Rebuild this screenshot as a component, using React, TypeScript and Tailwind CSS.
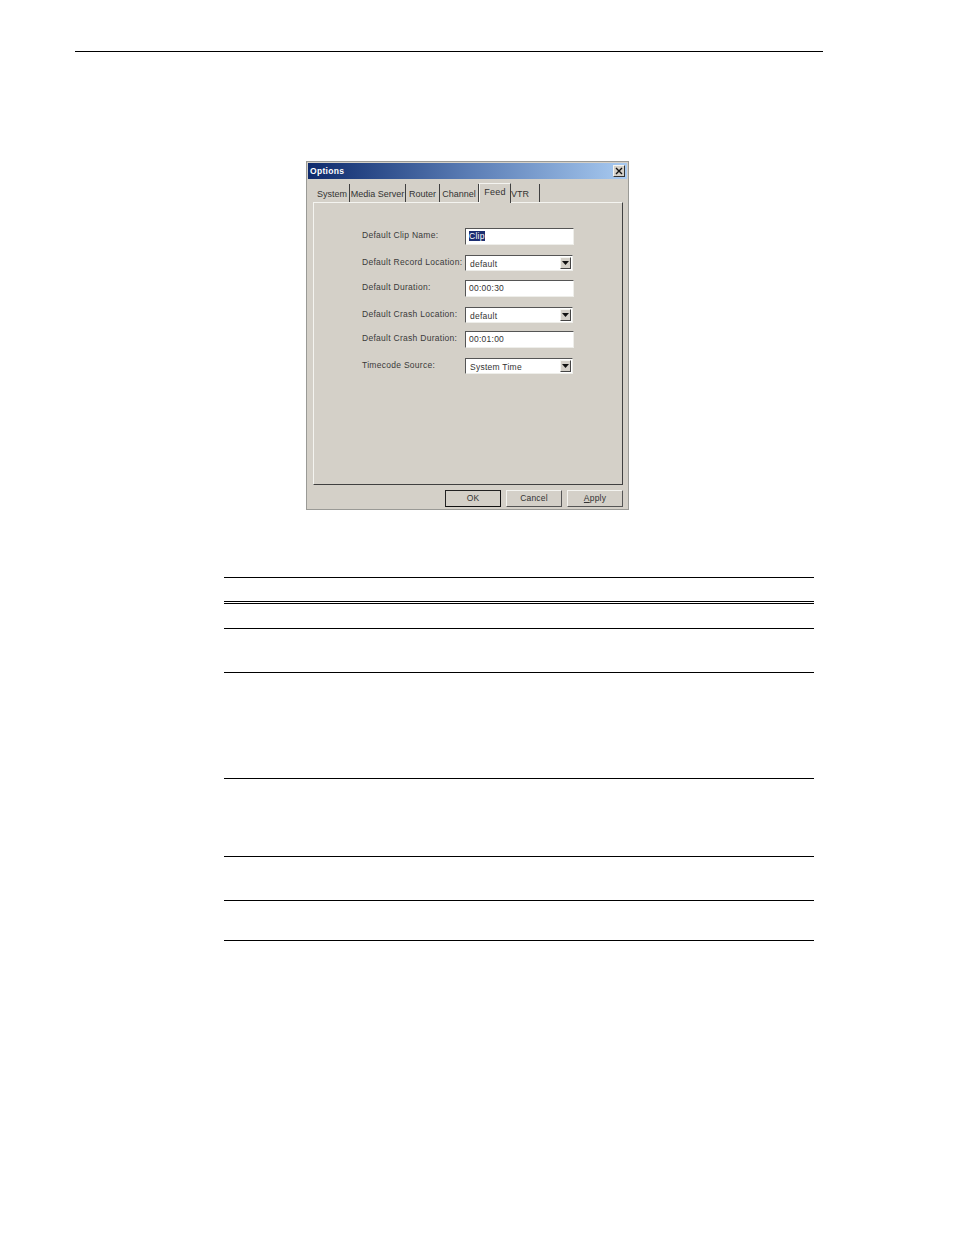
import React from "react";

const font = "font-['Liberation_Sans',Arial,sans-serif]";

function Tab({ label, className = "" }: { label: string; className?: string }) {
  return (
    <div className={`h-[18px] pt-[4px] text-center text-[9px] leading-[12px] text-[#333] border-r border-r-[#404040] ${className}`}>
      {label}
    </div>
  );
}

function TextField({ value, selected }: { value: string; selected?: boolean }) {
  return (
    <div className="h-[17px] w-[109px] border border-[#eeeeea] border-l-[#555] border-t-[#555] bg-white pl-[3px] text-[8.5px] leading-[15px] tracking-[0.25px] text-[#333]">
      {selected ? <span className="bg-[#1c2e70] text-white">{value}</span> : value}
    </div>
  );
}

function Select({ value }: { value: string }) {
  return (
    <div className="flex h-[16px] w-[108px] items-center justify-between border border-[#eeeeea] border-l-[#555] border-t-[#555] bg-white pl-[4px] pr-[1px] text-[8.5px] tracking-[0.25px] text-[#333]">
      <span className="pt-[2px]">{value}</span>
      <span className="flex h-[12px] w-[11px] items-center justify-center border border-[#f4f4f0] border-b-[#444] border-r-[#444] bg-[#d4d0c8]">
        <svg width="7" height="4" viewBox="0 0 7 4"><path d="M0 0h7L3.5 4z" fill="#111" /></svg>
      </span>
    </div>
  );
}

function Row({ label, mb, children }: { label: string; mb: string; children: React.ReactNode }) {
  return (
    <div className={`flex h-[16px] items-start ${mb}`}>
      <div className="w-[103px] whitespace-nowrap text-[8.5px] leading-[14px] tracking-[0.28px] text-[#3a3a3a]">{label}</div>
      {children}
    </div>
  );
}

function Button({ label, isDefault, className = "" }: { label: React.ReactNode; isDefault?: boolean; className?: string }) {
  return (
    <div
      className={`flex h-[17px] items-center justify-center text-[8.5px] tracking-[0.2px] text-[#333] border ${
        isDefault
          ? "w-[56px] border-[#222] border-b-[#111] border-r-[#111]"
          : "w-[56px] border-[#f4f4f0] border-b-[#555] border-r-[#555]"
      } ${className}`}
    >
      {label}
    </div>
  );
}

function Rule({ h }: { h: string }) {
  return <div className={`${h} border-b border-black`} />;
}

export default function App() {
  return (
    <div className={`h-[1235px] w-[954px] overflow-hidden bg-white ${font}`}>
      <div className="ml-[75px] mt-[51px] w-[748px] border-t border-black" />

      <div className="ml-[306px] mt-[109px] h-[349px] w-[323px] border border-[#9a9a96] bg-[#d4d0c8] p-[1px]">
        <div className="flex h-[16px] items-center justify-between bg-gradient-to-r from-[#0f2a6c] via-[#5a7cb4] to-[#a8caf0] pl-[2px] pr-[2px]">
          <span className="text-[8.5px] font-bold tracking-[0.3px] text-white">Options</span>
          <span className="flex h-[12px] w-[12px] items-center justify-center border border-[#f4f4f0] border-b-[#333] border-r-[#333] bg-[#d4d0c8]">
            <svg width="8" height="8" viewBox="0 0 8 8"><path d="M1 1l6 6M7 1L1 7" stroke="#111" strokeWidth="1.4" /></svg>
          </span>
        </div>

        <div className="relative z-10 ml-[7px] mt-[5px] flex h-[18px] items-end">
          <Tab label="System" className="w-[35px]" />
          <Tab label="Media Server" className="w-[56px]" />
          <Tab label="Router" className="w-[34px]" />
          <Tab label="Channel" className="w-[39px]" />
          <div className="mb-[-1px] h-[20px] w-[32px] border-t border-t-[#f4f4f0] border-l border-l-[#f4f4f0] border-r border-r-[#404040] bg-[#d4d0c8] pt-[2px] text-center text-[9px] leading-[12px] tracking-[0.3px] text-[#333]">
            Feed
          </div>
          <Tab label="VTR" className="w-[29px] pr-[10px]" />
        </div>

        <div className="ml-[5px] h-[283px] w-[310px] border border-[#f4f4f0] border-b-[#404040] border-r-[#404040] pl-[48px] pt-[25px]">
          <Row label="Default Clip Name:" mb="mb-[11px]"><TextField value="Clip" selected /></Row>
          <Row label="Default Record Location:" mb="mb-[9px]"><Select value="default" /></Row>
          <Row label="Default Duration:" mb="mb-[11px]"><TextField value="00:00:30" /></Row>
          <Row label="Default Crash Location:" mb="mb-[8px]"><Select value="default" /></Row>
          <Row label="Default Crash Duration:" mb="mb-[11px]"><TextField value="00:01:00" /></Row>
          <Row label="Timecode Source:" mb=""><Select value="System Time" /></Row>
        </div>

        <div className="ml-[137px] mt-[5px] flex gap-[5px]">
          <Button label="OK" isDefault />
          <Button label="Cancel" />
          <Button label={<span><span className="underline">A</span>pply</span>} />
        </div>
      </div>

      <div className="ml-[224px] mt-[67px] w-[590px] border-t border-black">
        <Rule h="h-[24px]" />
        <div className="h-[2px] border-b border-black" />
        <Rule h="h-[25px]" />
        <Rule h="h-[44px]" />
        <Rule h="h-[106px]" />
        <Rule h="h-[78px]" />
        <Rule h="h-[44px]" />
        <Rule h="h-[40px]" />
      </div>
    </div>
  );
}
